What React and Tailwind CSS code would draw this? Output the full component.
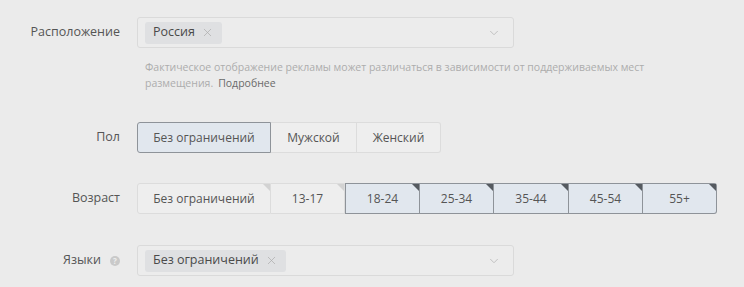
import { ChevronDown, X } from "lucide-react";

const ages = [
  { label: "Без ограничений", w: "w-[134px]", on: false },
  { label: "13-17", w: "w-[74px]", on: false },
  { label: "18-24", w: "w-[75px]", on: true },
  { label: "25-34", w: "w-[74px]", on: true },
  { label: "35-44", w: "w-[75px]", on: true },
  { label: "45-54", w: "w-[74px]", on: true },
  { label: "55+", w: "w-[74px]", on: true },
];

function Chip({ children }) {
  return (
    <div className="flex items-center gap-1.5 h-[22px] px-2 rounded-[3px] bg-[#dfe0e2] text-[12.5px] text-[#4a4a4a]">
      <span>{children}</span>
      <X size={13} strokeWidth={1.3} className="text-[#ababab]" />
    </div>
  );
}

function Select({ value }) {
  return (
    <div className="w-[377px] h-[31px] flex items-center justify-between pl-[7px] pr-[12px] border border-[#dadada] rounded-[3px] bg-[#ececec]">
      <Chip>{value}</Chip>
      <ChevronDown size={14} strokeWidth={1.6} className="text-[#bdbdbd]" />
    </div>
  );
}

export default function App() {
  return (
    <div
      className="w-[744px] h-[287px] bg-[#ebebeb] pt-[17px] text-[#555]"
      style={{ fontFamily: '"Open Sans", "Noto Sans", sans-serif' }}
    >
      {/* Расположение */}
      <div className="flex">
        <div className="w-[120px] h-[31px] flex items-center justify-end text-[12.5px] text-[#555]">
          Расположение
        </div>
        <div className="ml-[17px]">
          <Select value="Россия" />
          <div className="mt-[11px] pl-[8px] text-[10.5px] leading-[16px] text-[#adadad]">
            <div>
              Фактическое отображение рекламы может различаться в зависимости от поддерживаемых мест
            </div>
            <div className="flex gap-[5px]">
              <span>размещения.</span>
              <span className="text-[#6a6a6a]">Подробнее</span>
            </div>
          </div>
        </div>
      </div>

      {/* Пол */}
      <div className="flex mt-[31px]">
        <div className="w-[120px] h-[31px] flex items-center justify-end text-[12.5px]">
          Пол
        </div>
        <div className="ml-[17px] flex h-[31px] text-[12px] text-[#555]">
          <div className="w-[134px] flex items-center justify-center rounded-l-[3px] border border-[#8e9399] bg-[#e1e7ee]">
            Без ограничений
          </div>
          <div className="w-[86px] flex items-center justify-center border-y border-r border-[#dcdcdc] bg-[#eeeeee]">
            Мужской
          </div>
          <div className="w-[84px] flex items-center justify-center rounded-r-[3px] border-y border-r border-[#dcdcdc] bg-[#eeeeee]">
            Женский
          </div>
        </div>
      </div>

      {/* Возраст */}
      <div className="flex mt-[30px]">
        <div className="w-[120px] h-[31px] flex items-center justify-end text-[12.5px]">
          Возраст
        </div>
        <div className="ml-[17px] flex h-[31px] text-[12px] text-[#555]">
          {ages.map((a, i) => (
            <div
              key={a.label}
              className={`relative ${a.w} flex items-center justify-center border-y border-r ${
                a.on ? "border-[#8e9399] bg-[#e1e7ee]" : "border-[#dcdcdc] bg-[#eeeeee]"
              } ${i === 0 ? "border-l rounded-l-[3px]" : ""} ${i === 2 ? "border-l" : ""} ${
                i === ages.length - 1 ? "rounded-r-[3px]" : ""
              }`}
            >
              {a.label}
              <span
                className={`absolute top-0 right-0 w-[7px] h-[7px] [clip-path:polygon(0_0,100%_0,100%_100%)] ${
                  a.on ? "bg-[#555a60]" : "bg-[#d2d2d2]"
                }`}
              />
            </div>
          ))}
        </div>
      </div>

      {/* Языки */}
      <div className="flex mt-[31px]">
        <div className="w-[120px] h-[31px] flex items-center justify-end gap-[9px] text-[12.5px]">
          <span>Языки</span>
          <span className="w-[10px] h-[10px] rounded-full bg-[#c9c9c9] text-[8px] leading-[10px] text-center text-[#eee] font-bold">
            ?
          </span>
        </div>
        <div className="ml-[17px]">
          <Select value="Без ограничений" />
        </div>
      </div>
    </div>
  );
}
